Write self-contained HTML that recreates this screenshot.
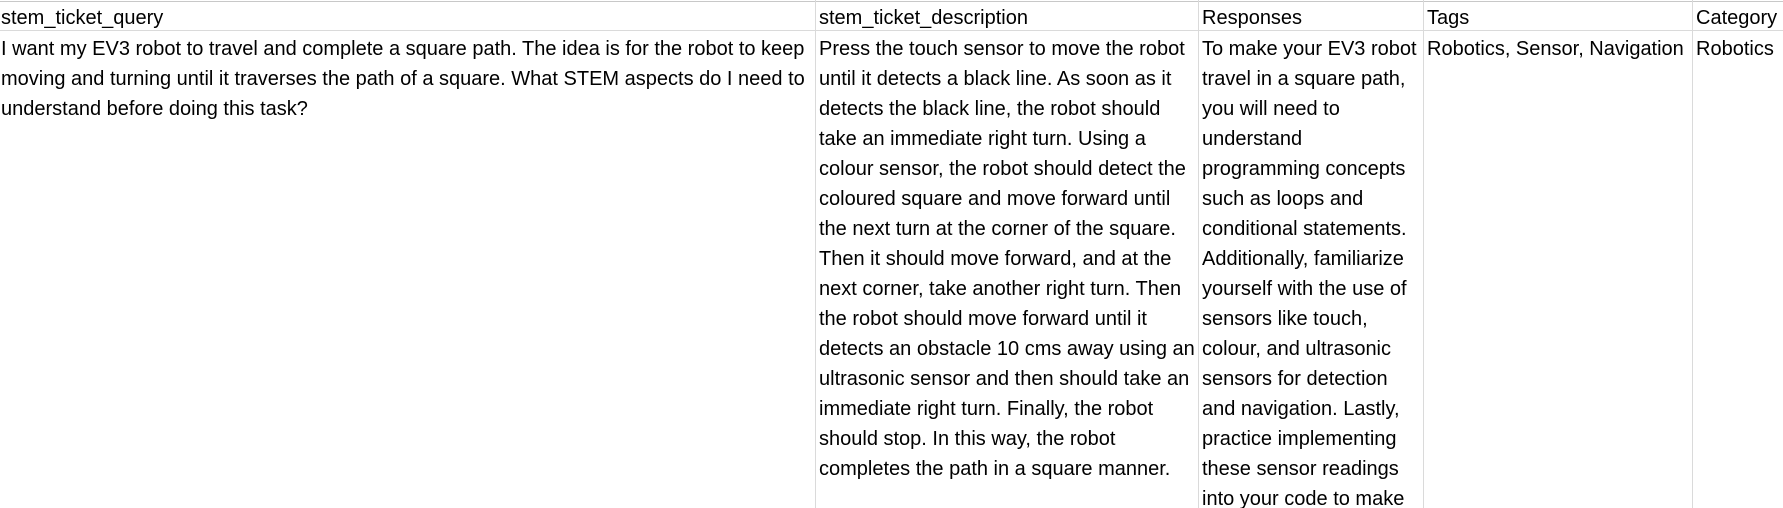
<!DOCTYPE html>
<html><head><meta charset="utf-8"><style>
html,body{margin:0;padding:0;background:#fff;width:1783px;height:508px;overflow:hidden}
body{position:relative;font-family:"Liberation Sans",sans-serif;font-size:20px;color:#000}
.v{position:absolute;top:0;width:1px;height:508px;background:#dadada}
.h{position:absolute;left:0;width:1783px;height:1px;background:#dadada}
.c{position:absolute;white-space:nowrap;line-height:30px}
</style></head><body>
<div class="h" style="top:1px;background:#c8c8c8"></div>
<div class="h" style="top:30px"></div>
<div class="v" style="left:815px"></div>
<div class="v" style="left:1198px"></div>
<div class="v" style="left:1423px"></div>
<div class="v" style="left:1692px"></div>

<div class="c" style="left:1px;top:3px">stem_ticket_query</div>
<div class="c" style="left:819px;top:3px">stem_ticket_description</div>
<div class="c" style="left:1202px;top:3px">Responses</div>
<div class="c" style="left:1427px;top:3px">Tags</div>
<div class="c" style="left:1696px;top:3px">Category</div>

<div class="c" style="left:1px;top:34px">I want my EV3 robot to travel and complete a square path. The idea is for the robot to keep<br>moving and turning until it traverses the path of a square. What STEM aspects do I need to<br>understand before doing this task?</div>

<div class="c" style="left:819px;top:34px">Press the touch sensor to move the robot<br>until it detects a black line. As soon as it<br>detects the black line, the robot should<br>take an immediate right turn. Using a<br>colour sensor, the robot should detect the<br>coloured square and move forward until<br>the next turn at the corner of the square.<br>Then it should move forward, and at the<br>next corner, take another right turn. Then<br>the robot should move forward until it<br>detects an obstacle 10 cms away using an<br>ultrasonic sensor and then should take an<br>immediate right turn. Finally, the robot<br>should stop. In this way, the robot<br>completes the path in a square manner.</div>

<div class="c" style="left:1202px;top:34px">To make your EV3 robot<br>travel in a square path,<br>you will need to<br>understand<br>programming concepts<br>such as loops and<br>conditional statements.<br>Additionally, familiarize<br>yourself with the use of<br>sensors like touch,<br>colour, and ultrasonic<br>sensors for detection<br>and navigation. Lastly,<br>practice implementing<br>these sensor readings<br>into your code to make</div>

<div class="c" style="left:1427px;top:34px">Robotics, Sensor, Navigation</div>
<div class="c" style="left:1696px;top:34px">Robotics</div>
</body></html>
